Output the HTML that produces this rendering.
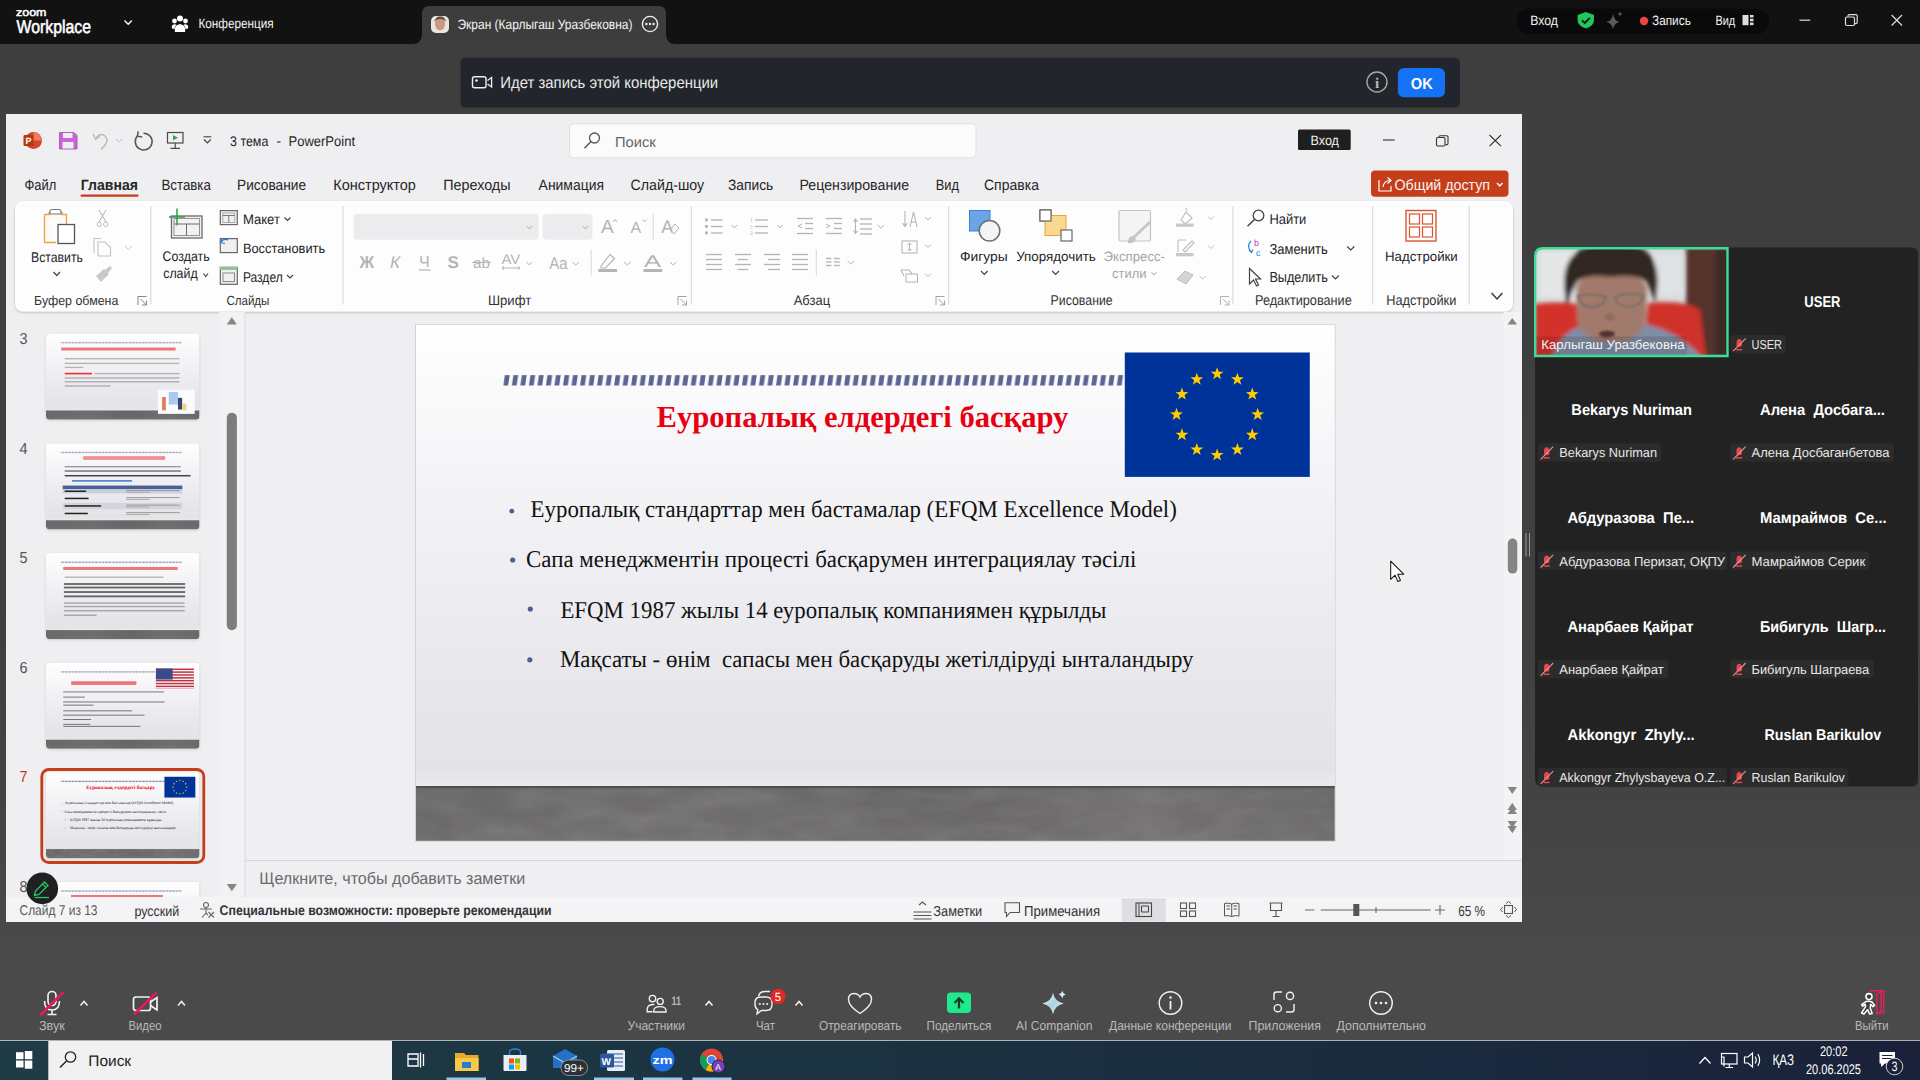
<!DOCTYPE html>
<html><head><meta charset="utf-8"><title>Zoom</title>
<style>*{margin:0;padding:0}html,body{width:1920px;height:1080px;overflow:hidden;background:#404040}svg{display:block}text{white-space:pre}</style>
</head><body><svg width="1920" height="1080" viewBox="0 0 1920 1080" text-rendering="geometricPrecision" xml:space="preserve">
<defs><linearGradient id="bg" x1="0" y1="0" x2="0" y2="1"><stop offset="0" stop-color="#3e3e3e"/><stop offset="0.55" stop-color="#404040"/><stop offset="0.74" stop-color="#434343"/><stop offset="0.9" stop-color="#4a4a4a"/><stop offset="1" stop-color="#4a4a4a"/></linearGradient><filter id="tsh" x="-10%" y="-10%" width="120%" height="130%"><feGaussianBlur stdDeviation="1.5"/></filter><filter id="rsh" x="-2%" y="-10%" width="104%" height="125%"><feGaussianBlur in="SourceAlpha" stdDeviation="1.2"/><feOffset dy="1" result="b"/><feComponentTransfer><feFuncA type="linear" slope="0.25"/></feComponentTransfer><feMerge><feMergeNode/><feMergeNode in="SourceGraphic"/></feMerge></filter></defs>
<rect x="0" y="0" width="1920" height="1080" fill="url(#bg)"/>
<rect x="0" y="0" width="1920" height="44" fill="#121212"/>
<path d="M412,44 Q422,44 422,34 L422,14 Q422,6 430,6 L658,6 Q666,6 666,14 L666,34 Q666,44 676,44 Z" fill="#3d3d3d"/>
<text x="16.00" y="16.40" font-family="Liberation Sans" font-size="11.01" fill="#fff" textLength="30.50" lengthAdjust="spacingAndGlyphs" stroke="#fff" stroke-width="0.5">zoom</text>
<text x="16.60" y="32.50" font-family="Liberation Sans" font-size="18.41" fill="#fff" textLength="74.38" lengthAdjust="spacingAndGlyphs" stroke="#fff" stroke-width="0.55">Workplace</text>
<path d="M124.5,20.5 L128.2,24.3 L131.8,20.5" stroke="#fff" stroke-width="1.3" fill="none"/>
<g fill="#fff"><circle cx="180" cy="18.5" r="3"/><circle cx="174.5" cy="21" r="2.4"/><circle cx="185.5" cy="21" r="2.4"/><path d="M175,32 Q173.5,25 180,24 Q186.5,25 185,32 Z"/><path d="M172,28.5 Q171,24.5 174.5,24.2 Q176,24.3 176.5,25 Q174.3,26.5 174.5,29 Z"/><path d="M188,28.5 Q189,24.5 185.5,24.2 Q184,24.3 183.5,25 Q185.7,26.5 185.5,29 Z"/></g>
<text x="198.40" y="28.40" font-family="Liberation Sans" font-size="13.62" fill="#f2f2f2" textLength="75.33" lengthAdjust="spacingAndGlyphs" >Конференция</text>
<rect x="431" y="16" width="18" height="17" rx="5" fill="#e8e4e0"/><ellipse cx="440" cy="24" rx="5" ry="6.5" fill="#c89a80"/><path d="M434,22 Q436,16 440,16.5 Q445,16 446,22 Q444,19 440,19 Q436,19 434,22Z" fill="#6b4a3a"/>
<text x="457.50" y="28.60" font-family="Liberation Sans" font-size="13.62" fill="#f2f2f2" textLength="174.97" lengthAdjust="spacingAndGlyphs" >Экран (Карлыгаш Уразбековна)</text>
<circle cx="650" cy="24" r="7.6" stroke="#eee" stroke-width="1.4" fill="none"/><g fill="#eee"><circle cx="646.4" cy="24" r="1.2"/><circle cx="650" cy="24" r="1.2"/><circle cx="653.6" cy="24" r="1.2"/></g>
<rect x="1516.5" y="8.5" width="253" height="25.5" rx="12.7" fill="#0a0a0a"/>
<text x="1530.20" y="25.20" font-family="Liberation Sans" font-size="13.62" fill="#f2f2f2" textLength="27.77" lengthAdjust="spacingAndGlyphs" >Вход</text>
<path d="M1585.8,12 L1594,15 L1594,20 Q1594,26 1585.8,28.5 Q1577.6,26 1577.6,20 L1577.6,15 Z" fill="#22c55e"/><path d="M1582,20.3 L1584.8,23 L1589.8,17.8" stroke="#111" stroke-width="1.8" fill="none"/>
<path d="M1613,14 Q1614,21 1620,22 Q1614,23 1613,29 Q1612,23 1606,22 Q1612,21 1613,14Z" fill="#5a5a5a"/><path d="M1620,11.5 Q1620.4,13.6 1622.5,14 Q1620.4,14.4 1620,16.5 Q1619.6,14.4 1617.5,14 Q1619.6,13.6 1620,11.5Z" fill="#5a5a5a"/>
<circle cx="1644" cy="21" r="4.2" fill="#f04444"/>
<text x="1652.00" y="24.50" font-family="Liberation Sans" font-size="13.48" fill="#f2f2f2" textLength="38.80" lengthAdjust="spacingAndGlyphs" >Запись</text>
<text x="1715.50" y="24.70" font-family="Liberation Sans" font-size="13.48" fill="#f2f2f2" textLength="19.72" lengthAdjust="spacingAndGlyphs" >Вид</text>
<rect x="1742.5" y="15" width="6" height="10.2" fill="#ddd"/><rect x="1750" y="15" width="3.5" height="2.5" fill="#ddd"/><rect x="1750" y="18.8" width="3.5" height="2.5" fill="#ddd"/><rect x="1750" y="22.6" width="3.5" height="2.5" fill="#ddd"/>
<path d="M1799.5,20.2 H1810.2" stroke="#ddd" stroke-width="1.2"/>
<rect x="1845.5" y="17" width="9" height="8.5" rx="1.2" stroke="#ddd" stroke-width="1.2" fill="none"/><path d="M1848,16.5 V15.8 Q1848,14.6 1849.2,14.6 H1856 Q1857.2,14.6 1857.2,15.8 V22.5 Q1857.2,23.7 1856,23.7 H1855" stroke="#ddd" stroke-width="1.2" fill="none"/>
<path d="M1891.6,15 L1902,25.5 M1902,15 L1891.6,25.5" stroke="#ddd" stroke-width="1.2"/>
<rect x="460.5" y="57.8" width="999.5" height="49.8" rx="5" fill="#22262c"/>
<rect x="472.5" y="76.8" width="13.5" height="11" rx="2" stroke="#eee" stroke-width="1.4" fill="none"/><circle cx="476.5" cy="80.5" r="1.3" fill="#eee"/><path d="M487.5,80.5 L491.6,77.5 V87 L487.5,84" stroke="#eee" stroke-width="1.3" fill="none"/>
<text x="500.20" y="88.20" font-family="Liberation Sans" font-size="16.23" fill="#e8e8e8" textLength="218.01" lengthAdjust="spacingAndGlyphs" >Идет запись этой конференции</text>
<circle cx="1377" cy="82" r="10" stroke="#a8a8a8" stroke-width="1.4" fill="none"/>
<text x="1377" y="87.5" font-family="Liberation Serif" font-size="15" fill="#b8b8b8" text-anchor="middle" font-weight="bold">i</text>
<rect x="1397.9" y="68" width="47.1" height="29.2" rx="6" fill="#1473f5"/>
<text x="1410.80" y="88.90" font-family="Liberation Sans" font-size="15.65" fill="#fff" font-weight="bold" textLength="21.95" lengthAdjust="spacingAndGlyphs" >OK</text>
<rect x="6" y="114" width="1516" height="808" fill="#efeef1"/>
<circle cx="33.5" cy="140.5" r="8.5" fill="#d0472b"/><path d="M33.5,132 A8.5,8.5 0 0 1 42,140.5 L33.5,140.5Z" fill="#ee7d5c"/><rect x="23.5" y="135" width="10" height="11" rx="1.2" fill="#b7380f"/><text x="25.6" y="144.2" font-family="Liberation Sans" font-weight="bold" font-size="9" fill="#fff">P</text>
<path d="M59.5,132.5 H74 L77,135.5 V149 H59.5 Z" fill="#c767d6"/><rect x="63" y="132.5" width="9.5" height="5.5" fill="#efeef1"/><rect x="62.5" y="142" width="11" height="7" fill="#efeef1"/><path d="M59.5,132.5 H74 L77,135.5 V149 H59.5 Z" stroke="#a04ab0" stroke-width="0.8" fill="none"/>
<path d="M96,138 Q100,132.5 104.5,135.5 Q109,139.5 105.5,144.5 L101,149.5" stroke="#b8b8b8" stroke-width="1.4" fill="none"/><path d="M93,134 L95.5,139 L100,136.5" stroke="#b8b8b8" stroke-width="1.4" fill="none"/>
<path d="M116.0,139.0 L119.0,142.0 L122.0,139.0" stroke="#c0c0c0" stroke-width="1" fill="none"/>
<path d="M137.6,135.8 A8.4,8.4 0 1 0 143.5,133.2" stroke="#555" stroke-width="1.5" fill="none"/><path d="M138.2,131.4 L137.4,136.2 L142.2,137" stroke="#555" stroke-width="1.5" fill="none"/>
<rect x="167.5" y="132.5" width="15.5" height="10.5" fill="none" stroke="#4a4a4a" stroke-width="1.2"/><path d="M173,135 L178,137.8 L173,140.6Z" fill="#3aa05a"/><path d="M175.2,143 V148 M170.5,148.3 H180" stroke="#4a4a4a" stroke-width="1.2"/>
<path d="M203.5,136.8 H211.3" stroke="#444" stroke-width="1.1"/><path d="M204,139.5 L207.4,143 L210.8,139.5" stroke="#444" stroke-width="1.2" fill="none"/>
<text x="230.00" y="146.10" font-family="Liberation Sans" font-size="14.06" fill="#262626" textLength="38.34" lengthAdjust="spacingAndGlyphs" >3 тема</text>
<path d="M277,142 H280.5" stroke="#262626" stroke-width="1.1"/>
<text x="288.50" y="146.10" font-family="Liberation Sans" font-size="14.06" fill="#262626" textLength="66.51" lengthAdjust="spacingAndGlyphs" >PowerPoint</text>
<rect x="569.5" y="123.7" width="406.5" height="34" rx="4" fill="#fbfbfc" stroke="#e2e1e4" stroke-width="1"/>
<circle cx="594.5" cy="138" r="5" stroke="#555" stroke-width="1.3" fill="none"/><path d="M591,141.5 L584.5,148.2" stroke="#555" stroke-width="1.4"/>
<text x="615.00" y="147.10" font-family="Liberation Sans" font-size="14.49" fill="#666" textLength="40.68" lengthAdjust="spacingAndGlyphs" >Поиск</text>
<rect x="1298" y="129.6" width="52.7" height="20.4" rx="1.5" fill="#1f1f1f"/>
<text x="1310.50" y="144.60" font-family="Liberation Sans" font-size="13.62" fill="#f0f0f0" textLength="28.47" lengthAdjust="spacingAndGlyphs" >Вход</text>
<path d="M1383,140 H1394.6" stroke="#333" stroke-width="1.1"/>
<rect x="1436.5" y="137.5" width="8.5" height="8.5" rx="1.2" stroke="#333" stroke-width="1.1" fill="none"/><path d="M1439,137 V136.8 Q1439,135.7 1440.2,135.7 H1446.8 Q1448,135.7 1448,136.8 V143.4 Q1448,144.6 1446.8,144.6 H1445.5" stroke="#333" stroke-width="1.1" fill="none"/>
<path d="M1489.5,135 L1501,146.2 M1501,135 L1489.5,146.2" stroke="#333" stroke-width="1.1"/>
<text x="24.40" y="190.00" font-family="Liberation Sans" font-size="14.93" fill="#262626" textLength="31.88" lengthAdjust="spacingAndGlyphs" >Файл</text>
<text x="80.80" y="190.00" font-family="Liberation Sans" font-size="14.93" fill="#262626" font-weight="bold" textLength="57.10" lengthAdjust="spacingAndGlyphs" >Главная</text>
<text x="161.50" y="190.00" font-family="Liberation Sans" font-size="14.93" fill="#262626" textLength="49.28" lengthAdjust="spacingAndGlyphs" >Вставка</text>
<text x="237.00" y="190.00" font-family="Liberation Sans" font-size="14.93" fill="#262626" textLength="69.03" lengthAdjust="spacingAndGlyphs" >Рисование</text>
<text x="333.30" y="190.00" font-family="Liberation Sans" font-size="14.93" fill="#262626" textLength="82.55" lengthAdjust="spacingAndGlyphs" >Конструктор</text>
<text x="443.30" y="190.00" font-family="Liberation Sans" font-size="14.93" fill="#262626" textLength="67.18" lengthAdjust="spacingAndGlyphs" >Переходы</text>
<text x="538.60" y="190.00" font-family="Liberation Sans" font-size="14.93" fill="#262626" textLength="65.44" lengthAdjust="spacingAndGlyphs" >Анимация</text>
<text x="630.60" y="190.00" font-family="Liberation Sans" font-size="14.93" fill="#262626" textLength="73.54" lengthAdjust="spacingAndGlyphs" >Слайд-шоу</text>
<text x="728.00" y="190.00" font-family="Liberation Sans" font-size="14.93" fill="#262626" textLength="45.29" lengthAdjust="spacingAndGlyphs" >Запись</text>
<text x="799.50" y="190.00" font-family="Liberation Sans" font-size="14.93" fill="#262626" textLength="109.55" lengthAdjust="spacingAndGlyphs" >Рецензирование</text>
<text x="935.70" y="190.00" font-family="Liberation Sans" font-size="14.93" fill="#262626" textLength="23.26" lengthAdjust="spacingAndGlyphs" >Вид</text>
<text x="984.00" y="190.00" font-family="Liberation Sans" font-size="14.93" fill="#262626" textLength="54.95" lengthAdjust="spacingAndGlyphs" >Справка</text>
<rect x="80.5" y="194.5" width="58" height="2.3" rx="1" fill="#c43e1c"/>
<rect x="1371" y="170.5" width="137.5" height="26.2" rx="4" fill="#c43e1c"/>
<path d="M1379,180 V191 H1391 V186" stroke="#fff" stroke-width="1.2" fill="none"/><path d="M1383,187 Q1384,180.5 1390,180.5 M1387.5,177.5 L1391,180.5 L1387.5,183.5" stroke="#fff" stroke-width="1.2" fill="none"/>
<text x="1394.50" y="190.00" font-family="Liberation Sans" font-size="14.93" fill="#fff2ee" textLength="95.51" lengthAdjust="spacingAndGlyphs" >Общий доступ</text>
<path d="M1497.0,183.0 L1499.8,186.0 L1502.5,183.0" stroke="#fff" stroke-width="1.3" fill="none"/>
<rect x="15" y="201" width="1498" height="110.5" rx="8" fill="#fdfdfe" filter="url(#rsh)"/>
<path d="M44.5,214.5 H49 V212.5 H62 V214.5 H66.5 V226 M44.5,214.5 V242.5 H56" stroke="#e8a43a" stroke-width="1.3" fill="#fdfaf5"/><path d="M50,211.5 Q50,209.5 52,209.5 H59 Q61,209.5 61,211.5 V214 H50Z" fill="#fff" stroke="#777" stroke-width="1.1"/>
<rect x="58" y="224.5" width="16.5" height="19" fill="#fff" stroke="#555" stroke-width="1.3"/>
<text x="31.00" y="262.00" font-family="Liberation Sans" font-size="14.06" fill="#262626" textLength="51.97" lengthAdjust="spacingAndGlyphs" >Вставить</text>
<path d="M53.5,272.0 L56.8,275.5 L60.0,272.0" stroke="#444" stroke-width="1.2" fill="none"/>
<path d="M99,210 L106,222 M106,210 L99,222" stroke="#bdbdbd" stroke-width="1.1"/><circle cx="99.3" cy="224.3" r="2.2" stroke="#bdbdbd" fill="none"/><circle cx="105.7" cy="224.3" r="2.2" stroke="#bdbdbd" fill="none"/>
<path d="M94,253 V238.5 H101 M98,242 H105 L110.5,247.5 V256 H98Z" stroke="#c2c2c2" stroke-width="1.1" fill="none"/>
<path d="M125.0,246.0 L128.5,249.5 L132.0,246.0" stroke="#c8c8c8" stroke-width="1" fill="none"/>
<path d="M96,276 L104,269 L109,274 L101,282 Z" fill="#c8c8c8"/><path d="M105,270 L110,266 L112,268 L108,273Z" fill="#c8c8c8"/>
<text x="34.00" y="305.40" font-family="Liberation Sans" font-size="13.19" fill="#333" textLength="84.39" lengthAdjust="spacingAndGlyphs" >Буфер обмена</text>
<path d="M138.0,305.0 V296.5 H146.5 M140.5,299.0 L146.5,305.0 M142.0,305.0 H146.5 V300.5" stroke="#777" stroke-width="0.9" fill="none"/>
<path d="M150.8,206.0 V304.5" stroke="#d4d4d8" stroke-width="1"/>
<rect x="171.5" y="216" width="30.5" height="22" fill="#f2f2f2" stroke="#6b6b6b" stroke-width="1.3"/><rect x="174" y="218.5" width="25.5" height="17" fill="none" stroke="#8a8a8a" stroke-width="0.9"/><path d="M174,224 H199.5 M186.5,224 V235.5" stroke="#6b6b6b" stroke-width="1"/>
<path d="M169,217 H185 M177,208.5 V225.5" stroke="#2e9e4a" stroke-width="1.5"/>
<text x="162.60" y="261.00" font-family="Liberation Sans" font-size="13.91" fill="#262626" textLength="47.02" lengthAdjust="spacingAndGlyphs" >Создать</text>
<text x="163.20" y="278.40" font-family="Liberation Sans" font-size="13.91" fill="#262626" textLength="34.47" lengthAdjust="spacingAndGlyphs" >слайд</text>
<path d="M203.5,273.5 L205.8,276.5 L208.0,273.5" stroke="#444" stroke-width="1.2" fill="none"/>
<rect x="220.3" y="210.6" width="17" height="14.0" fill="#f0f0f0" stroke="#666" stroke-width="1.2"/>
<rect x="220.3" y="238.6" width="17" height="14.0" fill="#f0f0f0" stroke="#666" stroke-width="1.2"/>
<rect x="220.3" y="267.3" width="17" height="17.0" fill="#f0f0f0" stroke="#666" stroke-width="1.2"/>
<path d="M222.5,215.5 H235 M228.8,215.5 V222.5" stroke="#777" stroke-width="1"/><rect x="222.8" y="213" width="12" height="9.5" fill="none" stroke="#999" stroke-width="0.8"/>
<path d="M221,242 Q224,238 228,240" stroke="#2d7fd3" stroke-width="1.4" fill="none"/><path d="M222,238 L220.5,242.5 L225,243.5" stroke="#2d7fd3" stroke-width="1.2" fill="none"/>
<rect x="220" y="267" width="17.5" height="3" fill="#8cc79a"/><rect x="223" y="273" width="11.5" height="8.5" fill="none" stroke="#888" stroke-width="1"/>
<text x="242.90" y="224.00" font-family="Liberation Sans" font-size="13.77" fill="#262626" textLength="37.06" lengthAdjust="spacingAndGlyphs" >Макет</text>
<path d="M284.5,217.5 L287.5,220.5 L290.5,217.5" stroke="#444" stroke-width="1.2" fill="none"/>
<text x="242.90" y="252.80" font-family="Liberation Sans" font-size="13.62" fill="#262626" textLength="82.29" lengthAdjust="spacingAndGlyphs" >Восстановить</text>
<text x="242.90" y="281.50" font-family="Liberation Sans" font-size="14.20" fill="#262626" textLength="39.83" lengthAdjust="spacingAndGlyphs" >Раздел</text>
<path d="M287.0,275.0 L290.0,278.0 L293.0,275.0" stroke="#444" stroke-width="1.2" fill="none"/>
<text x="226.40" y="305.40" font-family="Liberation Sans" font-size="13.19" fill="#333" textLength="43.03" lengthAdjust="spacingAndGlyphs" >Слайды</text>
<path d="M343.0,206.0 V304.5" stroke="#d4d4d8" stroke-width="1"/>
<rect x="353.6" y="214" width="185" height="25.8" rx="4" fill="#ececee"/>
<path d="M527.0,226.0 L529.5,229.0 L532.0,226.0" stroke="#b0b0b0" stroke-width="1" fill="none"/>
<rect x="542.8" y="214" width="49.7" height="25.8" rx="4" fill="#ececee"/>
<path d="M583.0,226.0 L585.5,229.0 L588.0,226.0" stroke="#b0b0b0" stroke-width="1" fill="none"/>
<text x="601" y="233.3" font-family="Liberation Sans" font-size="19" fill="#b4b4b4">A</text><path d="M613,222 L615,219.5 L617,222" stroke="#b4b4b4" fill="none"/>
<text x="630.6" y="233.3" font-family="Liberation Sans" font-size="16" fill="#b4b4b4">A</text><path d="M642.5,219.5 L644.5,222 L646.5,219.5" stroke="#b4b4b4" fill="none"/>
<path d="M653.2,214.0 V239.8" stroke="#d8d8d8" stroke-width="1"/>
<text x="661.3" y="233.3" font-family="Liberation Sans" font-size="18" fill="#b4b4b4">A</text><path d="M670,230 L675,224 L679,228 L674,234Z" fill="none" stroke="#b4b4b4"/>
<text x="359.4" y="267.6" font-family="Liberation Sans" font-weight="bold" font-size="17" fill="#b4b4b4" textLength="14.6" lengthAdjust="spacingAndGlyphs">Ж</text>
<text x="390" y="267.6" font-family="Liberation Sans" font-style="italic" font-size="17" fill="#b4b4b4">К</text>
<text x="419" y="266.5" font-family="Liberation Sans" font-size="16" fill="#b4b4b4">Ч</text><path d="M419,270 H430.4" stroke="#b4b4b4" stroke-width="1.2"/>
<text x="447.5" y="267.6" font-family="Liberation Sans" font-weight="bold" font-size="17" fill="#b4b4b4">S</text>
<text x="473" y="267.6" font-family="Liberation Sans" font-size="15" fill="#b4b4b4" textLength="17" lengthAdjust="spacingAndGlyphs">ab</text><path d="M472,262.5 H491" stroke="#b4b4b4" stroke-width="1"/>
<text x="501.4" y="264" font-family="Liberation Sans" font-size="14" fill="#b4b4b4" textLength="18.8" lengthAdjust="spacingAndGlyphs">AV</text><path d="M502,268 H520 M504,266 L502,268 L504,270 M518,266 L520,268 L518,270" stroke="#b4b4b4" fill="none"/>
<path d="M526.6,262.0 L529.3,265.0 L532.0,262.0" stroke="#b4b4b4" stroke-width="1" fill="none"/>
<text x="549.2" y="269" font-family="Liberation Sans" font-size="17" fill="#b4b4b4" textLength="18.4" lengthAdjust="spacingAndGlyphs">Aa</text>
<path d="M572.5,262.0 L575.8,265.0 L579.0,262.0" stroke="#b4b4b4" stroke-width="1" fill="none"/>
<path d="M591.2,249.5 V275.3" stroke="#d8d8d8" stroke-width="1"/>
<path d="M601,266 L610,254.5 L614.5,258.5 L605.5,268 L601,268Z" fill="none" stroke="#b4b4b4" stroke-width="1.2"/><rect x="598.3" y="269" width="18.7" height="3" fill="#b4b4b4"/>
<path d="M624.0,262.0 L627.3,265.0 L630.6,262.0" stroke="#b4b4b4" stroke-width="1" fill="none"/>
<text x="644" y="266.5" font-family="Liberation Sans" font-size="17" fill="#b4b4b4" textLength="17" lengthAdjust="spacingAndGlyphs">A</text><rect x="643.5" y="269" width="18.7" height="3" fill="#b4b4b4"/>
<path d="M670.0,262.0 L673.2,265.0 L676.5,262.0" stroke="#b4b4b4" stroke-width="1" fill="none"/>
<text x="487.90" y="305.30" font-family="Liberation Sans" font-size="13.91" fill="#333" textLength="43.33" lengthAdjust="spacingAndGlyphs" >Шрифт</text>
<path d="M678.0,305.0 V296.5 H686.5 M680.5,299.0 L686.5,305.0 M682.0,305.0 H686.5 V300.5" stroke="#999" stroke-width="0.9" fill="none"/>
<path d="M691.3,206.2 V304.4" stroke="#d4d4d8" stroke-width="1"/>
<g><rect x="705" y="218.5" width="2.8" height="2.8" fill="#b4b4b4"/><rect x="705" y="225.0" width="2.8" height="2.8" fill="#b4b4b4"/><rect x="705" y="231.5" width="2.8" height="2.8" fill="#b4b4b4"/><path d="M711.0,220.0 H722.6" stroke="#b4b4b4" stroke-width="1.3"/><path d="M711.0,226.5 H722.6" stroke="#b4b4b4" stroke-width="1.3"/><path d="M711.0,233.0 H722.6" stroke="#b4b4b4" stroke-width="1.3"/></g>
<path d="M731.7,225.0 L734.4,228.0 L737.0,225.0" stroke="#b4b4b4" stroke-width="1" fill="none"/>
<g font-family="Liberation Sans" font-size="5" fill="#b4b4b4"><text x="750" y="222">1</text><text x="750" y="228.5">2</text><text x="750" y="235">3</text></g><path d="M755.0,220.0 H767.8" stroke="#b4b4b4" stroke-width="1.3"/><path d="M755.0,226.5 H767.8" stroke="#b4b4b4" stroke-width="1.3"/><path d="M755.0,233.0 H767.8" stroke="#b4b4b4" stroke-width="1.3"/>
<path d="M777.5,225.0 L780.2,228.0 L783.0,225.0" stroke="#b4b4b4" stroke-width="1" fill="none"/>
<path d="M797.0,218.5 H813.0" stroke="#b4b4b4" stroke-width="1.3"/><path d="M797.0,233.5 H813.0" stroke="#b4b4b4" stroke-width="1.3"/><path d="M805.0,223.5 H813.0" stroke="#b4b4b4" stroke-width="1.3"/><path d="M805.0,228.5 H813.0" stroke="#b4b4b4" stroke-width="1.3"/><path d="M802,224 L798,226 L802,228" stroke="#b4b4b4" fill="none"/>
<path d="M826.0,218.5 H842.0" stroke="#b4b4b4" stroke-width="1.3"/><path d="M826.0,233.5 H842.0" stroke="#b4b4b4" stroke-width="1.3"/><path d="M834.0,223.5 H842.0" stroke="#b4b4b4" stroke-width="1.3"/><path d="M834.0,228.5 H842.0" stroke="#b4b4b4" stroke-width="1.3"/><path d="M826,224 L830,226 L826,228" stroke="#b4b4b4" fill="none"/>
<path d="M860.0,219.0 H872.0" stroke="#b4b4b4" stroke-width="1.3"/><path d="M860.0,224.0 H872.0" stroke="#b4b4b4" stroke-width="1.3"/><path d="M860.0,229.0 H872.0" stroke="#b4b4b4" stroke-width="1.3"/><path d="M860.0,234.0 H872.0" stroke="#b4b4b4" stroke-width="1.3"/><path d="M855.5,219.5 V233 M853.5,222 L855.5,219 L857.5,222 M853.5,230.5 L855.5,233.5 L857.5,230.5" stroke="#b4b4b4" stroke-width="1.1" fill="none"/>
<path d="M877.6,225.0 L880.8,228.0 L884.0,225.0" stroke="#b4b4b4" stroke-width="1" fill="none"/>
<path d="M905,211 V226 M902.5,223 L905,226.5 L907.5,223 M910,227 L913.5,212 L917,227 M911.2,222 H915.8" stroke="#b4b4b4" stroke-width="1.1" fill="none"/>
<path d="M925.0,217.0 L928.0,220.0 L931.0,217.0" stroke="#b4b4b4" stroke-width="1" fill="none"/>
<path d="M706.0,254.5 H722.0" stroke="#b4b4b4" stroke-width="1.3"/><path d="M706.0,259.5 H722.0" stroke="#b4b4b4" stroke-width="1.3"/><path d="M706.0,264.5 H722.0" stroke="#b4b4b4" stroke-width="1.3"/><path d="M706.0,269.5 H722.0" stroke="#b4b4b4" stroke-width="1.3"/><path d="M735.0,254.5 H751.0" stroke="#b4b4b4" stroke-width="1.3"/><path d="M735.0,264.5 H751.0" stroke="#b4b4b4" stroke-width="1.3"/><path d="M738.0,259.5 H748.0" stroke="#b4b4b4" stroke-width="1.3"/><path d="M738.0,269.5 H748.0" stroke="#b4b4b4" stroke-width="1.3"/><path d="M764.0,254.5 H780.0" stroke="#b4b4b4" stroke-width="1.3"/><path d="M764.0,264.5 H780.0" stroke="#b4b4b4" stroke-width="1.3"/><path d="M768.0,259.5 H780.0" stroke="#b4b4b4" stroke-width="1.3"/><path d="M768.0,269.5 H780.0" stroke="#b4b4b4" stroke-width="1.3"/><path d="M792.0,254.5 H808.0" stroke="#b4b4b4" stroke-width="1.3"/><path d="M792.0,259.5 H808.0" stroke="#b4b4b4" stroke-width="1.3"/><path d="M792.0,264.5 H808.0" stroke="#b4b4b4" stroke-width="1.3"/><path d="M792.0,269.5 H808.0" stroke="#b4b4b4" stroke-width="1.3"/>
<path d="M816.3,249.5 V275.3" stroke="#d8d8d8" stroke-width="1"/>
<path d="M826.0,258.5 H831.5" stroke="#b4b4b4" stroke-width="1.3"/><path d="M826.0,262.0 H831.5" stroke="#b4b4b4" stroke-width="1.3"/><path d="M826.0,265.5 H831.5" stroke="#b4b4b4" stroke-width="1.3"/><path d="M834.0,258.5 H839.8" stroke="#b4b4b4" stroke-width="1.3"/><path d="M834.0,262.0 H839.8" stroke="#b4b4b4" stroke-width="1.3"/><path d="M834.0,265.5 H839.8" stroke="#b4b4b4" stroke-width="1.3"/>
<path d="M847.6,261.0 L850.8,264.0 L854.0,261.0" stroke="#b4b4b4" stroke-width="1" fill="none"/>
<rect x="902" y="241" width="15" height="12" fill="none" stroke="#b4b4b4" stroke-width="1.1"/><path d="M909.5,243 V251 M907.5,245 L909.5,243 L911.5,245 M907.5,249 L909.5,251 L911.5,249" stroke="#b4b4b4" fill="none"/>
<path d="M925.0,244.5 L928.0,247.5 L931.0,244.5" stroke="#b4b4b4" stroke-width="1" fill="none"/>
<path d="M901,270 H909 L912,274 M901,270 L904,276" stroke="#b4b4b4" stroke-width="1.1" fill="none"/><rect x="906" y="274" width="11.5" height="8" fill="none" stroke="#b4b4b4"/>
<path d="M925.0,273.5 L928.0,276.5 L931.0,273.5" stroke="#b4b4b4" stroke-width="1" fill="none"/>
<text x="793.70" y="305.30" font-family="Liberation Sans" font-size="13.91" fill="#333" textLength="36.49" lengthAdjust="spacingAndGlyphs" >Абзац</text>
<path d="M936.0,305.0 V296.5 H944.5 M938.5,299.0 L944.5,305.0 M940.0,305.0 H944.5 V300.5" stroke="#999" stroke-width="0.9" fill="none"/>
<path d="M948.7,206.2 V304.4" stroke="#d4d4d8" stroke-width="1"/>
<rect x="969.5" y="210.5" width="20.5" height="20.5" fill="#6aa6e6" stroke="#3f80d2" stroke-width="1"/><circle cx="989.5" cy="230.8" r="10.3" fill="#f4f4f4" stroke="#6e6e6e" stroke-width="1.5"/>
<text x="960.00" y="261.20" font-family="Liberation Sans" font-size="13.48" fill="#262626" textLength="47.64" lengthAdjust="spacingAndGlyphs" >Фигуры</text>
<path d="M981.0,271.0 L984.3,274.5 L987.6,271.0" stroke="#444" stroke-width="1.2" fill="none"/>
<rect x="1040" y="210" width="11" height="11" fill="#fff" stroke="#666" stroke-width="1.2"/><path d="M1052,216 H1065 V230" stroke="#e4a43a" stroke-width="0" fill="none"/><rect x="1045" y="215.5" width="21" height="20" fill="#fbd88f" stroke="#e8a33a" stroke-width="1"/><rect x="1040" y="210" width="11" height="11" fill="#fff" stroke="#666" stroke-width="1.2"/><rect x="1061" y="230" width="11" height="11" fill="#fff" stroke="#666" stroke-width="1.2"/>
<text x="1016.20" y="261.20" font-family="Liberation Sans" font-size="13.48" fill="#262626" textLength="79.63" lengthAdjust="spacingAndGlyphs" >Упорядочить</text>
<path d="M1052.2,271.0 L1055.6,274.5 L1059.0,271.0" stroke="#444" stroke-width="1.2" fill="none"/>
<rect x="1119" y="210.5" width="31.5" height="30.5" rx="1.5" fill="#f4f4f4" stroke="#c4c4c4" stroke-width="1.2"/><path d="M1133,238 L1150,222" stroke="#c4c4c4" stroke-width="2.5"/><path d="M1128,243 Q1128,236 1133,236 L1136,239 Q1134,244 1128,243Z" fill="#c4c4c4"/>
<text x="1103.50" y="261.20" font-family="Liberation Sans" font-size="13.48" fill="#a6a6a6" textLength="61.53" lengthAdjust="spacingAndGlyphs" >Экспресс-</text>
<text x="1112.00" y="278.40" font-family="Liberation Sans" font-size="13.48" fill="#a6a6a6" textLength="34.49" lengthAdjust="spacingAndGlyphs" >стили</text>
<path d="M1151.4,272.0 L1154.1,275.0 L1156.7,272.0" stroke="#aaa" stroke-width="1" fill="none"/>
<path d="M1181,220 L1186,212 L1192,218 L1185,224Z M1187,211 L1186,208" stroke="#bdbdbd" stroke-width="1.1" fill="none"/><rect x="1176" y="223.5" width="17.5" height="3.3" fill="#c8c8c8"/>
<path d="M1208.0,216.5 L1211.0,219.5 L1214.0,216.5" stroke="#c0c0c0" stroke-width="1" fill="none"/>
<path d="M1178,240 H1186 M1178,240 V252 M1183,250 L1192,241 L1194,243 L1185,252Z" stroke="#bdbdbd" stroke-width="1.1" fill="none"/><rect x="1176" y="253" width="17.5" height="3.3" fill="#c8c8c8"/>
<path d="M1208.0,245.5 L1211.0,248.5 L1214.0,245.5" stroke="#c0c0c0" stroke-width="1" fill="none"/>
<path d="M1177,279 L1185,271 L1193,275 L1186,284 Z" fill="#d4d4d4" stroke="#bdbdbd" stroke-width="1"/>
<path d="M1199.7,276.0 L1202.8,279.0 L1205.8,276.0" stroke="#c0c0c0" stroke-width="1" fill="none"/>
<text x="1050.60" y="305.10" font-family="Liberation Sans" font-size="14.20" fill="#333" textLength="62.11" lengthAdjust="spacingAndGlyphs" >Рисование</text>
<path d="M1220.5,305.0 V296.5 H1229.0 M1223.0,299.0 L1229.0,305.0 M1224.5,305.0 H1229.0 V300.5" stroke="#aaa" stroke-width="0.9" fill="none"/>
<path d="M1232.9,206.2 V304.4" stroke="#d4d4d8" stroke-width="1"/>
<circle cx="1258.5" cy="215.5" r="5.3" stroke="#444" stroke-width="1.3" fill="none"/><path d="M1254.5,219.5 L1247.5,226.3" stroke="#444" stroke-width="1.5"/>
<text x="1269.40" y="224.30" font-family="Liberation Sans" font-size="14.20" fill="#262626" textLength="36.92" lengthAdjust="spacingAndGlyphs" >Найти</text>
<text x="1254" y="246" font-family="Liberation Sans" font-size="9" fill="#b346c2">b</text><text x="1256" y="256" font-family="Liberation Sans" font-size="9" fill="#2d7fd3">c</text><path d="M1251,241 Q1246,246 1251,252 M1249,250 L1251.5,252.5 L1253,249.5" stroke="#2d7fd3" stroke-width="1.2" fill="none"/>
<text x="1269.40" y="253.50" font-family="Liberation Sans" font-size="14.49" fill="#262626" textLength="58.36" lengthAdjust="spacingAndGlyphs" >Заменить</text>
<path d="M1347.2,246.5 L1350.8,250.0 L1354.3,246.5" stroke="#444" stroke-width="1.2" fill="none"/>
<path d="M1249.5,268.5 L1249.5,284 L1253.5,280 L1256.5,286 L1258.5,285 L1255.5,279 L1260.5,279 Z" fill="none" stroke="#444" stroke-width="1.2"/>
<text x="1269.40" y="282.10" font-family="Liberation Sans" font-size="14.49" fill="#262626" textLength="58.39" lengthAdjust="spacingAndGlyphs" >Выделить</text>
<path d="M1332.0,275.5 L1335.5,279.0 L1338.9,275.5" stroke="#444" stroke-width="1.2" fill="none"/>
<text x="1255.00" y="305.10" font-family="Liberation Sans" font-size="14.20" fill="#333" textLength="96.77" lengthAdjust="spacingAndGlyphs" >Редактирование</text>
<path d="M1372.7,206.2 V304.4" stroke="#d4d4d8" stroke-width="1"/>
<rect x="1406" y="210.5" width="30" height="30.5" fill="none" stroke="#d9552f" stroke-width="1.4"/><rect x="1409.5" y="214" width="10" height="10" fill="none" stroke="#d9552f" stroke-width="1.2"/><rect x="1422.5" y="214" width="10" height="10" fill="none" stroke="#d9552f" stroke-width="1.2"/><rect x="1409.5" y="227" width="10" height="10" fill="none" stroke="#d9552f" stroke-width="1.2"/><rect x="1422.5" y="227" width="10" height="10" fill="none" stroke="#d9552f" stroke-width="1.2"/>
<text x="1385.00" y="261.20" font-family="Liberation Sans" font-size="13.48" fill="#262626" textLength="72.77" lengthAdjust="spacingAndGlyphs" >Надстройки</text>
<text x="1386.20" y="305.10" font-family="Liberation Sans" font-size="14.20" fill="#333" textLength="70.11" lengthAdjust="spacingAndGlyphs" >Надстройки</text>
<path d="M1469.2,206.2 V304.4" stroke="#d4d4d8" stroke-width="1"/>
<path d="M1491.6,293.0 L1497.0,299.0 L1502.4,293.0" stroke="#333" stroke-width="1.4" fill="none"/>
<defs><linearGradient id="sbg" x1="0" y1="0" x2="0" y2="1"><stop offset="0" stop-color="#ffffff"/><stop offset="0.3" stop-color="#f4f3f6"/><stop offset="0.75" stop-color="#e6e5ea"/><stop offset="0.86" stop-color="#e4e3e8"/><stop offset="0.9" stop-color="#ebeaee"/><stop offset="1" stop-color="#ebeaee"/></linearGradient><linearGradient id="band" x1="0" y1="0" x2="1" y2="0"><stop offset="0" stop-color="#6a6869"/><stop offset="0.3" stop-color="#6f6d6e"/><stop offset="0.55" stop-color="#676566"/><stop offset="0.8" stop-color="#716e6f"/><stop offset="1" stop-color="#6a6869"/></linearGradient><linearGradient id="bandv" x1="0" y1="0" x2="0" y2="1"><stop offset="0" stop-color="#000" stop-opacity="0.12"/><stop offset="0.08" stop-color="#000" stop-opacity="0"/><stop offset="1" stop-color="#fff" stop-opacity="0.03"/></linearGradient><filter id="stone" x="0" y="0" width="100%" height="100%"><feTurbulence type="fractalNoise" baseFrequency="0.02 0.06" numOctaves="3" seed="7"/><feColorMatrix type="matrix" values="0 0 0 0 0.5  0 0 0 0 0.49  0 0 0 0 0.49  0.9 0 0 0 -0.25"/></filter><pattern id="dash" x="87.3" y="0" width="8.52" height="600" patternUnits="userSpaceOnUse"><path d="M1.6,49.7 H6.4 L4.8,60.6 H0 Z" fill="#5b6691"/></pattern><g id="s7"><rect x="0" y="0" width="918.7" height="515.6" fill="url(#sbg)"/><rect x="87.3" y="49.7" width="621.5" height="10.9" fill="url(#dash)"/><rect x="708.8" y="27.3" width="185" height="124.4" fill="#003399"/><polygon points="801.10,42.00 802.68,46.53 807.47,46.63 803.65,49.53 805.04,54.12 801.10,51.38 797.16,54.12 798.55,49.53 794.73,46.63 799.52,46.53" fill="#ffcc00"/><polygon points="821.40,47.44 822.98,51.97 827.77,52.07 823.95,54.97 825.34,59.56 821.40,56.82 817.46,59.56 818.85,54.97 815.03,52.07 819.82,51.97" fill="#ffcc00"/><polygon points="836.26,62.30 837.84,66.83 842.63,66.93 838.81,69.83 840.20,74.42 836.26,71.68 832.32,74.42 833.71,69.83 829.89,66.93 834.69,66.83" fill="#ffcc00"/><polygon points="841.70,82.60 843.28,87.13 848.07,87.23 844.25,90.13 845.64,94.72 841.70,91.98 837.76,94.72 839.15,90.13 835.33,87.23 840.12,87.13" fill="#ffcc00"/><polygon points="836.26,102.90 837.84,107.43 842.63,107.53 838.81,110.43 840.20,115.02 836.26,112.28 832.32,115.02 833.71,110.43 829.89,107.53 834.69,107.43" fill="#ffcc00"/><polygon points="821.40,117.76 822.98,122.29 827.77,122.39 823.95,125.29 825.34,129.88 821.40,127.14 817.46,129.88 818.85,125.29 815.03,122.39 819.82,122.29" fill="#ffcc00"/><polygon points="801.10,123.20 802.68,127.73 807.47,127.83 803.65,130.73 805.04,135.32 801.10,132.58 797.16,135.32 798.55,130.73 794.73,127.83 799.52,127.73" fill="#ffcc00"/><polygon points="780.80,117.76 782.38,122.29 787.17,122.39 783.35,125.29 784.74,129.88 780.80,127.14 776.86,129.88 778.25,125.29 774.43,122.39 779.22,122.29" fill="#ffcc00"/><polygon points="765.94,102.90 767.51,107.43 772.31,107.53 768.49,110.43 769.88,115.02 765.94,112.28 762.00,115.02 763.39,110.43 759.57,107.53 764.36,107.43" fill="#ffcc00"/><polygon points="760.50,82.60 762.08,87.13 766.87,87.23 763.05,90.13 764.44,94.72 760.50,91.98 756.56,94.72 757.95,90.13 754.13,87.23 758.92,87.13" fill="#ffcc00"/><polygon points="765.94,62.30 767.51,66.83 772.31,66.93 768.49,69.83 769.88,74.42 765.94,71.68 762.00,74.42 763.39,69.83 759.57,66.93 764.36,66.83" fill="#ffcc00"/><polygon points="780.80,47.44 782.38,51.97 787.17,52.07 783.35,54.97 784.74,59.56 780.80,56.82 776.86,59.56 778.25,54.97 774.43,52.07 779.22,51.97" fill="#ffcc00"/><text x="240.60" y="101.50" font-family="Liberation Serif" font-size="30.62" fill="#e60012" font-weight="bold" textLength="411.83" lengthAdjust="spacingAndGlyphs" >Еуропалық елдердегі басқару</text><circle cx="95.8" cy="186.0" r="2.4" fill="#4d5f96"/><circle cx="96.7" cy="234.8" r="2.6" fill="#4d5f96"/><circle cx="114.3" cy="283.8" r="2.6" fill="#4d5f96"/><circle cx="113.8" cy="334.6" r="2.6" fill="#4d5f96"/><text x="114.60" y="191.70" font-family="Liberation Serif" font-size="24.00" fill="#111" textLength="646.19" lengthAdjust="spacingAndGlyphs" >Еуропалық стандарттар мен бастамалар (EFQM Excellence Model)</text><text x="110.00" y="242.30" font-family="Liberation Serif" font-size="24.00" fill="#111" textLength="610.25" lengthAdjust="spacingAndGlyphs" >Сапа менеджментін процесті басқарумен интеграциялау тәсілі</text><text x="144.40" y="292.40" font-family="Liberation Serif" font-size="24.00" fill="#111" textLength="546.00" lengthAdjust="spacingAndGlyphs" >EFQM 1987 жылы 14 еуропалық компаниямен құрылды</text><text x="143.90" y="341.80" font-family="Liberation Serif" font-size="24.00" fill="#111" textLength="633.62" lengthAdjust="spacingAndGlyphs" >Мақсаты - өнім  сапасы мен басқаруды жетілдіруді ынталандыру</text><rect x="0" y="461.1" width="918.7" height="54.5" fill="url(#band)"/><rect x="0" y="461.1" width="918.7" height="54.5" fill="url(#bandv)"/><rect x="0" y="461.1" width="918.7" height="54.5" filter="url(#stone)" opacity="0.3"/><path d="M0,461.6 H918.7" stroke="#3c3b3c" stroke-width="1.2"/></g></defs>
<rect x="219" y="312" width="26" height="585" fill="#f2f1f4"/>
<path d="M245,312 V897" stroke="#dddce0" stroke-width="1"/>
<path d="M245,860.5 H1522" stroke="#d6d5d9" stroke-width="1"/>
<rect x="1503.5" y="312" width="18.5" height="548" fill="#f3f2f5"/>
<path d="M1507.5,324.5 L1512.3,318 L1517,324.5Z" fill="#858585"/>
<rect x="1507.8" y="538.6" width="9.5" height="35" rx="4.7" fill="#858585"/>
<path d="M1507.5,787 H1517 L1512.3,794Z" fill="#858585"/>
<path d="M1507.5,810 L1512.3,802.8 L1517,810Z M1507.5,814 L1512.3,806.8 L1517,814Z" fill="#858585"/>
<path d="M1507.5,821 H1517 L1512.3,828Z M1507.5,826 H1517 L1512.3,833.2Z" fill="#858585"/>
<path d="M226.8,324.4 L231.8,317.2 L236.9,324.4Z" fill="#858585"/>
<rect x="226.8" y="412.8" width="10.1" height="217.5" rx="5" fill="#7d7d7d"/>
<path d="M226.8,884 H236.9 L231.8,891.3Z" fill="#858585"/>
<rect x="415.5" y="324.7" width="919.7" height="516.6" fill="none" stroke="#d4d3d7" stroke-width="1"/>
<use href="#s7" transform="translate(416.0,325.2)"/>
<clipPath id="paneclip"><rect x="7" y="312" width="212" height="585"/></clipPath>
<clipPath id="tclip"><rect x="0" y="0" width="918.7" height="515.6" rx="24"/></clipPath>
<g clip-path="url(#paneclip)">
<text x="19.60" y="343.70" font-family="Liberation Sans" font-size="15.94" fill="#555" textLength="8.04" lengthAdjust="spacingAndGlyphs" >3</text>
<rect x="46" y="333.5" width="153.5" height="86.1" rx="4" fill="#000" opacity="0.12" transform="translate(0,1)" filter="url(#tsh)"/>
<g transform="translate(46,333.5) scale(0.16708)"><g clip-path="url(#tclip)">
<rect x="0" y="0" width="918.7" height="515.6" fill="url(#sbg)"/>
<rect x="87.3" y="49.7" width="724.0" height="10.9" fill="url(#dash)" opacity="0.8"/>
<rect x="0" y="461.1" width="918.7" height="54.5" fill="url(#band)"/>
<rect x="0" y="461.1" width="918.7" height="54.5" fill="url(#bandv)"/>
<rect x="91.0" y="84.0" width="685.0" height="18.0" fill="#e8202a" opacity="0.60"/>
<rect x="112.0" y="147.0" width="687.0" height="8.0" fill="#9a9a9a" opacity="0.70"/>
<rect x="112.0" y="175.0" width="687.0" height="8.0" fill="#9a9a9a" opacity="0.70"/>
<rect x="112.0" y="199.0" width="111.0" height="8.0" fill="#9a9a9a" opacity="0.70"/>
<rect x="112.0" y="235.0" width="163.0" height="10.0" fill="#e8202a" opacity="0.90"/>
<rect x="290.0" y="236.0" width="509.0" height="8.0" fill="#9a9a9a" opacity="0.70"/>
<rect x="112.0" y="262.0" width="687.0" height="8.0" fill="#8e8e8e" opacity="0.70"/>
<rect x="112.0" y="285.0" width="687.0" height="8.0" fill="#8e8e8e" opacity="0.70"/>
<rect x="112.0" y="310.0" width="274.0" height="8.0" fill="#8e8e8e" opacity="0.70"/>
<rect x="670" y="337" width="220" height="144" fill="#fbfbfd"/><rect x="695" y="380" width="22" height="80" fill="#e07a5a"/><rect x="735" y="350" width="55" height="75" fill="#a9c9ee"/><rect x="790" y="385" width="25" height="70" fill="#3f456e"/><rect x="815" y="420" width="25" height="40" fill="#f2d28a"/>
</g></g>
<text x="19.60" y="453.50" font-family="Liberation Sans" font-size="15.94" fill="#555" textLength="8.04" lengthAdjust="spacingAndGlyphs" >4</text>
<rect x="46" y="443.3" width="153.5" height="86.1" rx="4" fill="#000" opacity="0.12" transform="translate(0,1)" filter="url(#tsh)"/>
<g transform="translate(46,443.3) scale(0.16708)"><g clip-path="url(#tclip)">
<rect x="0" y="0" width="918.7" height="515.6" fill="url(#sbg)"/>
<rect x="87.3" y="49.7" width="724.0" height="10.9" fill="url(#dash)" opacity="0.8"/>
<rect x="0" y="461.1" width="918.7" height="54.5" fill="url(#band)"/>
<rect x="0" y="461.1" width="918.7" height="54.5" fill="url(#bandv)"/>
<rect x="223.0" y="77.0" width="490.0" height="22.0" fill="#e8202a" opacity="0.50"/>
<rect x="112.0" y="136.0" width="695.0" height="8.0" fill="#9a9a9a" opacity="1.00"/>
<rect x="112.0" y="161.5" width="695.0" height="9.0" fill="#777" opacity="1.00"/>
<rect x="112.0" y="189.5" width="753.0" height="9.0" fill="#444" opacity="1.00"/>
<rect x="155.0" y="220.0" width="360.0" height="10.0" fill="#3a78c8" opacity="0.90"/>
<rect x="100.0" y="253.0" width="716.0" height="22.0" fill="#4a5f96" opacity="1.00"/>
<rect x="100" y="275" width="716" height="25" fill="#c9cfe0"/><rect x="100" y="356" width="716" height="39" fill="#d4d4de"/>
<rect x="112.0" y="282.5" width="128.0" height="9.0" fill="#222" opacity="1.00"/>
<rect x="480.0" y="279.0" width="320.0" height="6.0" fill="#999" opacity="1.00"/>
<rect x="480.0" y="290.0" width="140.0" height="6.0" fill="#aaa" opacity="1.00"/>
<rect x="112.0" y="325.5" width="143.0" height="9.0" fill="#222" opacity="1.00"/>
<rect x="480.0" y="322.0" width="320.0" height="6.0" fill="#999" opacity="1.00"/>
<rect x="480.0" y="333.0" width="140.0" height="6.0" fill="#aaa" opacity="1.00"/>
<rect x="112.0" y="370.5" width="218.0" height="9.0" fill="#222" opacity="1.00"/>
<rect x="480.0" y="367.0" width="320.0" height="6.0" fill="#999" opacity="1.00"/>
<rect x="480.0" y="378.0" width="140.0" height="6.0" fill="#aaa" opacity="1.00"/>
<rect x="112.0" y="415.5" width="138.0" height="9.0" fill="#222" opacity="1.00"/>
<rect x="480.0" y="412.0" width="320.0" height="6.0" fill="#999" opacity="1.00"/>
<rect x="480.0" y="423.0" width="140.0" height="6.0" fill="#aaa" opacity="1.00"/>
</g></g>
<text x="19.60" y="563.30" font-family="Liberation Sans" font-size="15.94" fill="#555" textLength="8.04" lengthAdjust="spacingAndGlyphs" >5</text>
<rect x="46" y="553.1" width="153.5" height="86.1" rx="4" fill="#000" opacity="0.12" transform="translate(0,1)" filter="url(#tsh)"/>
<g transform="translate(46,553.1) scale(0.16708)"><g clip-path="url(#tclip)">
<rect x="0" y="0" width="918.7" height="515.6" fill="url(#sbg)"/>
<rect x="87.3" y="49.7" width="724.0" height="10.9" fill="url(#dash)" opacity="0.8"/>
<rect x="0" y="461.1" width="918.7" height="54.5" fill="url(#band)"/>
<rect x="0" y="461.1" width="918.7" height="54.5" fill="url(#bandv)"/>
<rect x="103.0" y="83.0" width="685.0" height="18.0" fill="#e8202a" opacity="0.60"/>
<rect x="112.0" y="140.5" width="592.0" height="7.0" fill="#aaa" opacity="1.00"/>
<rect x="107.0" y="179.5" width="726.0" height="11.0" fill="#3a3a3a" opacity="0.75"/>
<rect x="107.0" y="200.5" width="726.0" height="11.0" fill="#3a3a3a" opacity="0.75"/>
<rect x="107.0" y="227.5" width="726.0" height="11.0" fill="#3a3a3a" opacity="0.75"/>
<rect x="107.0" y="253.5" width="726.0" height="11.0" fill="#3a3a3a" opacity="0.75"/>
<rect x="107.0" y="295.0" width="723.0" height="8.0" fill="#777" opacity="0.60"/>
<rect x="107.0" y="316.0" width="723.0" height="8.0" fill="#777" opacity="0.60"/>
<rect x="107.0" y="341.0" width="723.0" height="8.0" fill="#777" opacity="0.60"/>
<rect x="107.0" y="368.0" width="196.0" height="8.0" fill="#777" opacity="0.60"/>
</g></g>
<text x="19.60" y="672.90" font-family="Liberation Sans" font-size="15.94" fill="#555" textLength="8.04" lengthAdjust="spacingAndGlyphs" >6</text>
<rect x="46" y="662.7" width="153.5" height="86.1" rx="4" fill="#000" opacity="0.12" transform="translate(0,1)" filter="url(#tsh)"/>
<g transform="translate(46,662.7) scale(0.16708)"><g clip-path="url(#tclip)">
<rect x="0" y="0" width="918.7" height="515.6" fill="url(#sbg)"/>
<rect x="87.3" y="49.7" width="565.7" height="10.9" fill="url(#dash)" opacity="0.8"/>
<rect x="0" y="461.1" width="918.7" height="54.5" fill="url(#band)"/>
<rect x="0" y="461.1" width="918.7" height="54.5" fill="url(#bandv)"/>
<rect x="658" y="35" width="227" height="120" fill="#c0303f"/>
<rect x="658" y="43.5" width="227" height="8.5" fill="#f4f4f4"/>
<rect x="658" y="60.6" width="227" height="8.5" fill="#f4f4f4"/>
<rect x="658" y="77.7" width="227" height="8.5" fill="#f4f4f4"/>
<rect x="658" y="94.8" width="227" height="8.5" fill="#f4f4f4"/>
<rect x="658" y="111.9" width="227" height="8.5" fill="#f4f4f4"/>
<rect x="658" y="129.0" width="227" height="8.5" fill="#f4f4f4"/>
<rect x="658" y="146.1" width="227" height="8.5" fill="#f4f4f4"/>
<rect x="658" y="35" width="100" height="66" fill="#3b4a8a"/>
<rect x="151.0" y="111.0" width="390.0" height="22.0" fill="#e8202a" opacity="0.60"/>
<rect x="103.0" y="172.0" width="602.0" height="6.0" fill="#444" opacity="0.70"/>
<rect x="103.0" y="203.0" width="129.0" height="6.0" fill="#444" opacity="0.70"/>
<rect x="103.0" y="232.0" width="607.0" height="6.0" fill="#444" opacity="0.70"/>
<rect x="103.0" y="251.0" width="182.0" height="6.0" fill="#444" opacity="0.70"/>
<rect x="103.0" y="285.0" width="412.0" height="6.0" fill="#444" opacity="0.70"/>
<rect x="103.0" y="311.0" width="487.0" height="6.0" fill="#444" opacity="0.70"/>
<rect x="103.0" y="337.0" width="167.0" height="6.0" fill="#444" opacity="0.70"/>
<rect x="103.0" y="366.0" width="162.0" height="6.0" fill="#444" opacity="0.70"/>
<rect x="103.0" y="378.0" width="462.0" height="6.0" fill="#444" opacity="0.70"/>
</g></g>
<text x="19.60" y="782.40" font-family="Liberation Sans" font-size="15.94" fill="#c43e1c" textLength="8.04" lengthAdjust="spacingAndGlyphs" >7</text>
<rect x="41.8" y="769.5" width="162" height="93" rx="7" fill="none" stroke="#c43e1c" stroke-width="2.8"/>
<rect x="46" y="772.2" width="153.5" height="86.1" rx="4" fill="#000" opacity="0.12" transform="translate(0,1)" filter="url(#tsh)"/>
<g transform="translate(46,772.2) scale(0.16708)"><g clip-path="url(#tclip)">
<use href="#s7"/>
</g></g>
<text x="19.60" y="892.00" font-family="Liberation Sans" font-size="15.94" fill="#555" textLength="8.04" lengthAdjust="spacingAndGlyphs" >8</text>
<rect x="46" y="881.8" width="153.5" height="86.1" rx="4" fill="#000" opacity="0.12" transform="translate(0,1)" filter="url(#tsh)"/>
<g transform="translate(46,881.8) scale(0.16708)"><g clip-path="url(#tclip)">
<rect x="0" y="0" width="918.7" height="515.6" fill="url(#sbg)"/>
<rect x="87.3" y="49.7" width="724.0" height="10.9" fill="url(#dash)" opacity="0.8"/>
<rect x="0" y="461.1" width="918.7" height="54.5" fill="url(#band)"/>
<rect x="0" y="461.1" width="918.7" height="54.5" fill="url(#bandv)"/>
<rect x="150.0" y="79.0" width="550.0" height="14.0" fill="#e8202a" opacity="0.60"/>
</g></g>
</g>
<text x="259.30" y="884.40" font-family="Liberation Sans" font-size="16.81" fill="#6b6b6b" textLength="265.97" lengthAdjust="spacingAndGlyphs" >Щелкните, чтобы добавить заметки</text>
<rect x="6" y="897" width="1516" height="25" fill="#f4f4f6"/>
<text x="19.50" y="915.10" font-family="Liberation Sans" font-size="14.20" fill="#5a5a5a" textLength="78.02" lengthAdjust="spacingAndGlyphs" >Слайд 7 из 13</text>
<text x="134.40" y="915.70" font-family="Liberation Sans" font-size="14.20" fill="#333" textLength="44.96" lengthAdjust="spacingAndGlyphs" >русский</text>
<path d="M206,905 m-2.5,0 a2.5,2.5 0 1 0 5,0 a2.5,2.5 0 1 0 -5,0 M200,909 H212 M206,908 V913 L202,917.5 M206,913 L208,915" stroke="#666" stroke-width="1.1" fill="none"/><path d="M208.5,912 L214,917.5 M214,912 L208.5,917.5" stroke="#666" stroke-width="1.1"/>
<text x="219.60" y="914.60" font-family="Liberation Sans" font-size="13.91" fill="#333" font-weight="bold" textLength="331.98" lengthAdjust="spacingAndGlyphs" >Специальные возможности: проверьте рекомендации</text>
<path d="M913.5,912 H931.5 M913.5,915.5 H931.5 M913.5,919 H931.5 M919,905 L922.5,902 L926,905" stroke="#555" stroke-width="1.1" fill="none"/>
<text x="933.30" y="916.00" font-family="Liberation Sans" font-size="14.49" fill="#333" textLength="48.96" lengthAdjust="spacingAndGlyphs" >Заметки</text>
<path d="M1005,902.8 H1019.5 V912.5 H1010 L1006.5,916.5 V912.5 H1005Z" stroke="#555" stroke-width="1.1" fill="none"/>
<text x="1024.00" y="916.00" font-family="Liberation Sans" font-size="14.49" fill="#333" textLength="76.01" lengthAdjust="spacingAndGlyphs" >Примечания</text>
<rect x="1121.7" y="898.3" width="44" height="23.4" fill="#dedde1"/>
<rect x="1136" y="903" width="15.5" height="13.5" stroke="#444" stroke-width="1.1" fill="none"/><path d="M1139,903 V916.5 M1141.5,906 H1148.5 V912 H1141.5Z" stroke="#444" stroke-width="1" fill="none"/>
<g stroke="#555" stroke-width="1.1" fill="none"><rect x="1180.5" y="903" width="6" height="5.5"/><rect x="1189.5" y="903" width="6" height="5.5"/><rect x="1180.5" y="911" width="6" height="5.5"/><rect x="1189.5" y="911" width="6" height="5.5"/></g>
<path d="M1224.5,903.5 Q1228,902.5 1231.7,904 Q1235.4,902.5 1239,903.5 V916 Q1235.4,915 1231.7,916.5 Q1228,915 1224.5,916Z M1231.7,904 V916.5 M1226.5,906 H1230 M1226.5,909 H1230 M1233.5,906 H1237 M1233.5,909 H1237" stroke="#555" stroke-width="1" fill="none"/>
<path d="M1269.5,903 H1282.5 M1270.5,903 V910.5 H1281.5 V903 M1276,910.5 V916.5 M1272.5,916.5 H1279.5" stroke="#555" stroke-width="1.1" fill="none"/>
<path d="M1305,910 H1314.3 M1320.7,910 H1430.7 M1376,907 V913 M1435,910 H1445 M1440,905 V915" stroke="#666" stroke-width="1.1" fill="none"/>
<rect x="1353.3" y="904" width="6" height="12" fill="#555"/>
<text x="1458.30" y="915.70" font-family="Liberation Sans" font-size="14.49" fill="#333" textLength="26.74" lengthAdjust="spacingAndGlyphs" >65 %</text>
<rect x="1504.5" y="905.5" width="8" height="8" stroke="#555" stroke-width="1.1" fill="none"/><path d="M1502.5,907 L1500.5,909.5 L1502.5,912 M1514.5,907 L1516.5,909.5 L1514.5,912 M1506,903.5 L1508.5,901.5 L1511,903.5 M1506,915.5 L1508.5,917.5 L1511,915.5" stroke="#555" stroke-width="1" fill="none"/>
<path transform="translate(1390.7,561.2) scale(1.12)" d="M0,0 L0,16.2 L3.9,12.5 L6.4,18.2 L8.7,17.2 L6.3,11.6 L11.6,11.6 Z" fill="#fff" stroke="#111" stroke-width="0.9" stroke-linejoin="round"/>
<circle cx="42.3" cy="888.4" r="15.8" fill="#1f2021"/><path d="M34.5,895.5 L35.5,891 L44.5,882 L48,885.5 L39,894.5Z M42.5,884 L46,887.5" stroke="#27c46a" stroke-width="1.3" fill="none"/><path d="M34.5,897.5 H49" stroke="#27c46a" stroke-width="1.3"/>
<path d="M1543,247.5 H1912 Q1918,247.5 1918,253.5 V780 Q1918,786.5 1912,786.5 H1543 Q1535,786.5 1535,778.5 V255.5 Q1535,247.5 1543,247.5Z" fill="#222222"/>
<clipPath id="vclip"><path d="M1542,248 H1728 V357 H1535 V255 Q1535,248 1542,248Z"/></clipPath>
<filter id="vblur"><feGaussianBlur stdDeviation="2.2"/></filter><filter id="vblur2"><feGaussianBlur stdDeviation="1"/></filter>
<g clip-path="url(#vclip)"><rect x="1534" y="247" width="195" height="111" fill="#d9dbdc"/><g filter="url(#vblur)"><rect x="1540" y="252" width="40" height="45" fill="#e4e6e7"/><rect x="1655" y="255" width="28" height="40" fill="#e0e2e3"/><rect x="1686" y="247" width="45" height="111" fill="#55302a"/><rect x="1716" y="247" width="15" height="111" fill="#3b2a26"/><path d="M1534,304 Q1560,300 1582,305 L1590,358 H1534Z" fill="#d3312a"/><path d="M1648,303 Q1684,299 1700,310 L1706,358 H1642Z" fill="#d0302a"/><path d="M1552,358 Q1560,330 1588,324 Q1614,320 1645,324 Q1680,332 1702,358Z" fill="#7f8ea6"/><path d="M1576,292 Q1576,272 1611,272 Q1647,272 1647,292 L1646,318 Q1642,342 1611,343 Q1580,342 1577,318Z" fill="#a27a6c"/><path d="M1567,306 Q1556,258 1586,247 Q1612,240 1642,248 Q1664,262 1655,303 Q1650,288 1646,281 Q1636,274 1611,277 Q1586,274 1578,281 Q1571,292 1567,306Z" fill="#302824"/></g><g filter="url(#vblur2)"><path d="M1578,296 Q1592,292 1606,297 Q1604,307 1590,307 Q1580,306 1578,296Z M1615,297 Q1630,291 1643,296 Q1642,306 1628,307 Q1616,306 1615,297Z" stroke="#6d6a62" stroke-width="1.5" fill="none"/><ellipse cx="1607" cy="334" rx="8" ry="3.2" fill="#4e3232"/><ellipse cx="1610" cy="317" rx="5" ry="4" fill="#8a6458" opacity="0.7"/></g><rect x="1534" y="336.4" width="153" height="21" fill="#000" opacity="0.12"/></g>
<path d="M1543,248.2 H1727.5 V356 H1535.2 V256 Q1535.2,248.2 1543,248.2Z" fill="none" stroke="#3ddc97" stroke-width="2.4"/>
<text x="1541.30" y="348.70" font-family="Liberation Sans" font-size="12.90" fill="#f4f4f4" textLength="143.27" lengthAdjust="spacingAndGlyphs" >Карлыгаш Уразбековна</text>
<text x="1804.30" y="307.00" font-family="Liberation Sans" font-size="15.51" fill="#fff" font-weight="bold" textLength="36.17" lengthAdjust="spacingAndGlyphs" >USER</text>
<rect x="1730.2" y="335.1" width="55.3" height="18.5" rx="4" fill="#2c2c2c"/>
<path d="M1736.5,342.6 Q1736.5,339.1 1739.2,339.1 Q1741.9,339.1 1741.9,342.6 L1741.9,346.1 Q1739.2,347.8 1736.5,346.1 Z" fill="#e4474c"/><rect x="1736.2" y="348.9" width="6" height="1.5" fill="#e4474c"/><path d="M1733.2,351.1 L1745.7,338.4" stroke="#f08a8d" stroke-width="1.2"/>
<text x="1751.50" y="349.10" font-family="Liberation Sans" font-size="13.04" fill="#e8e8e8" textLength="30.51" lengthAdjust="spacingAndGlyphs" >USER</text>
<text x="1571.30" y="415.20" font-family="Liberation Sans" font-size="15.51" fill="#fff" font-weight="bold" textLength="120.70" lengthAdjust="spacingAndGlyphs" >Bekarys Nuriman</text>
<rect x="1537.7" y="443.3" width="123.5" height="18.5" rx="4" fill="#2c2c2c"/>
<path d="M1544.0,450.8 Q1544.0,447.3 1546.7,447.3 Q1549.4,447.3 1549.4,450.8 L1549.4,454.3 Q1546.7,456.0 1544.0,454.3 Z" fill="#e4474c"/><rect x="1543.7" y="457.1" width="6" height="1.5" fill="#e4474c"/><path d="M1540.7,459.3 L1553.2,446.6" stroke="#f08a8d" stroke-width="1.2"/>
<text x="1559.30" y="457.30" font-family="Liberation Sans" font-size="13.04" fill="#e8e8e8" textLength="97.70" lengthAdjust="spacingAndGlyphs" >Bekarys Nuriman</text>
<text x="1760.00" y="415.20" font-family="Liberation Sans" font-size="15.51" fill="#fff" font-weight="bold" textLength="124.95" lengthAdjust="spacingAndGlyphs" >Алена  Досбага...</text>
<rect x="1730.2" y="443.3" width="163.5" height="18.5" rx="4" fill="#2c2c2c"/>
<path d="M1736.5,450.8 Q1736.5,447.3 1739.2,447.3 Q1741.9,447.3 1741.9,450.8 L1741.9,454.3 Q1739.2,456.0 1736.5,454.3 Z" fill="#e4474c"/><rect x="1736.2" y="457.1" width="6" height="1.5" fill="#e4474c"/><path d="M1733.2,459.3 L1745.7,446.6" stroke="#f08a8d" stroke-width="1.2"/>
<text x="1751.50" y="457.30" font-family="Liberation Sans" font-size="13.04" fill="#e8e8e8" textLength="137.96" lengthAdjust="spacingAndGlyphs" >Алена Досбаганбетова</text>
<text x="1567.40" y="523.40" font-family="Liberation Sans" font-size="15.51" fill="#fff" font-weight="bold" textLength="126.82" lengthAdjust="spacingAndGlyphs" >Абдуразова  Пе...</text>
<rect x="1537.7" y="551.5" width="189.5" height="18.5" rx="4" fill="#2c2c2c"/>
<path d="M1544.0,559.0 Q1544.0,555.5 1546.7,555.5 Q1549.4,555.5 1549.4,559.0 L1549.4,562.5 Q1546.7,564.2 1544.0,562.5 Z" fill="#e4474c"/><rect x="1543.7" y="565.3" width="6" height="1.5" fill="#e4474c"/><path d="M1540.7,567.5 L1553.2,554.8" stroke="#f08a8d" stroke-width="1.2"/>
<text x="1559.30" y="565.50" font-family="Liberation Sans" font-size="13.04" fill="#e8e8e8" textLength="165.83" lengthAdjust="spacingAndGlyphs" >Абдуразова Перизат, ОҚПУ</text>
<text x="1759.90" y="523.40" font-family="Liberation Sans" font-size="15.51" fill="#fff" font-weight="bold" textLength="126.81" lengthAdjust="spacingAndGlyphs" >Мамраймов  Се...</text>
<rect x="1730.2" y="551.5" width="138.8" height="18.5" rx="4" fill="#2c2c2c"/>
<path d="M1736.5,559.0 Q1736.5,555.5 1739.2,555.5 Q1741.9,555.5 1741.9,559.0 L1741.9,562.5 Q1739.2,564.2 1736.5,562.5 Z" fill="#e4474c"/><rect x="1736.2" y="565.3" width="6" height="1.5" fill="#e4474c"/><path d="M1733.2,567.5 L1745.7,554.8" stroke="#f08a8d" stroke-width="1.2"/>
<text x="1751.50" y="565.50" font-family="Liberation Sans" font-size="13.04" fill="#e8e8e8" textLength="113.65" lengthAdjust="spacingAndGlyphs" >Мамраймов Серик</text>
<text x="1567.40" y="631.60" font-family="Liberation Sans" font-size="15.51" fill="#fff" font-weight="bold" textLength="126.18" lengthAdjust="spacingAndGlyphs" >Анарбаев Қайрат</text>
<rect x="1537.7" y="659.7" width="130.5" height="18.5" rx="4" fill="#2c2c2c"/>
<path d="M1544.0,667.2 Q1544.0,663.7 1546.7,663.7 Q1549.4,663.7 1549.4,667.2 L1549.4,670.7 Q1546.7,672.4 1544.0,670.7 Z" fill="#e4474c"/><rect x="1543.7" y="673.5" width="6" height="1.5" fill="#e4474c"/><path d="M1540.7,675.7 L1553.2,663.0" stroke="#f08a8d" stroke-width="1.2"/>
<text x="1559.30" y="673.70" font-family="Liberation Sans" font-size="13.04" fill="#e8e8e8" textLength="104.33" lengthAdjust="spacingAndGlyphs" >Анарбаев Қайрат</text>
<text x="1759.90" y="631.60" font-family="Liberation Sans" font-size="15.51" fill="#fff" font-weight="bold" textLength="126.07" lengthAdjust="spacingAndGlyphs" >Бибигуль  Шагр...</text>
<rect x="1730.2" y="659.7" width="143.7" height="18.5" rx="4" fill="#2c2c2c"/>
<path d="M1736.5,667.2 Q1736.5,663.7 1739.2,663.7 Q1741.9,663.7 1741.9,667.2 L1741.9,670.7 Q1739.2,672.4 1736.5,670.7 Z" fill="#e4474c"/><rect x="1736.2" y="673.5" width="6" height="1.5" fill="#e4474c"/><path d="M1733.2,675.7 L1745.7,663.0" stroke="#f08a8d" stroke-width="1.2"/>
<text x="1751.50" y="673.70" font-family="Liberation Sans" font-size="13.04" fill="#e8e8e8" textLength="117.70" lengthAdjust="spacingAndGlyphs" >Бибигуль Шаграева</text>
<text x="1567.40" y="739.80" font-family="Liberation Sans" font-size="15.51" fill="#fff" font-weight="bold" textLength="127.36" lengthAdjust="spacingAndGlyphs" >Akkongyr  Zhyly...</text>
<rect x="1537.7" y="767.9" width="189.5" height="18.5" rx="4" fill="#2c2c2c"/>
<path d="M1544.0,775.4 Q1544.0,771.9 1546.7,771.9 Q1549.4,771.9 1549.4,775.4 L1549.4,778.9 Q1546.7,780.6 1544.0,778.9 Z" fill="#e4474c"/><rect x="1543.7" y="781.7" width="6" height="1.5" fill="#e4474c"/><path d="M1540.7,783.9 L1553.2,771.2" stroke="#f08a8d" stroke-width="1.2"/>
<text x="1559.30" y="781.90" font-family="Liberation Sans" font-size="13.04" fill="#e8e8e8" textLength="165.99" lengthAdjust="spacingAndGlyphs" >Akkongyr Zhylysbayeva O.Z...</text>
<text x="1764.50" y="739.80" font-family="Liberation Sans" font-size="15.51" fill="#fff" font-weight="bold" textLength="116.72" lengthAdjust="spacingAndGlyphs" >Ruslan Barikulov</text>
<rect x="1730.2" y="767.9" width="118.3" height="18.5" rx="4" fill="#2c2c2c"/>
<path d="M1736.5,775.4 Q1736.5,771.9 1739.2,771.9 Q1741.9,771.9 1741.9,775.4 L1741.9,778.9 Q1739.2,780.6 1736.5,778.9 Z" fill="#e4474c"/><rect x="1736.2" y="781.7" width="6" height="1.5" fill="#e4474c"/><path d="M1733.2,783.9 L1745.7,771.2" stroke="#f08a8d" stroke-width="1.2"/>
<text x="1751.50" y="781.90" font-family="Liberation Sans" font-size="13.04" fill="#e8e8e8" textLength="93.34" lengthAdjust="spacingAndGlyphs" >Ruslan Barikulov</text>
<path d="M1526,533 V556.5 M1529.5,533 V556.5" stroke="#9a9a9a" stroke-width="1"/>
<rect x="48" y="991.5" width="8" height="14" rx="4" stroke="#f2f2f2" stroke-width="1.6" fill="none"/><path d="M44.5,1001 Q44.5,1010 52,1010 Q59.5,1010 59.5,1001 M52,1010 V1014.5 M47.5,1014.5 H56.5" stroke="#f2f2f2" stroke-width="1.6" fill="none"/>
<path d="M40.5,1015 L63.5,992" stroke="#e8195a" stroke-width="2.6"/>
<path d="M80.5,1005.5 L84,1001.5 L87.5,1005.5" stroke="#f2f2f2" stroke-width="1.5" fill="none"/>
<text x="39.00" y="1030.00" font-family="Liberation Sans" font-size="13.04" fill="#b9b9b9" textLength="25.86" lengthAdjust="spacingAndGlyphs" >Звук</text>
<rect x="133.5" y="997" width="17" height="13.5" rx="2.5" stroke="#f2f2f2" stroke-width="1.7" fill="none"/><path d="M150.5,1002 L157,997.5 V1010 L150.5,1005.5" stroke="#f2f2f2" stroke-width="1.7" fill="none"/>
<path d="M134,1014.5 L156.5,992.5" stroke="#e8195a" stroke-width="2.6"/>
<path d="M178,1005.5 L181.5,1001.5 L185,1005.5" stroke="#f2f2f2" stroke-width="1.5" fill="none"/>
<text x="128.50" y="1030.00" font-family="Liberation Sans" font-size="13.04" fill="#b9b9b9" textLength="32.98" lengthAdjust="spacingAndGlyphs" >Видео</text>
<g stroke="#f2f2f2" stroke-width="1.4" fill="none"><circle cx="652.5" cy="998.6" r="3.2"/><path d="M654.5,1004.6 Q647.2,1004.2 647.2,1009.2 V1011.8 H652.5"/><circle cx="660.2" cy="1001.4" r="3"/><path d="M653.8,1012 V1010.6 Q653.8,1006.6 660,1006.6 Q666,1006.6 666,1010.6 V1012Z"/></g>
<text x="671.50" y="1005.00" font-family="Liberation Sans" font-size="12.32" fill="#b9b9b9" font-weight="bold" textLength="9.50" lengthAdjust="spacingAndGlyphs" >11</text>
<path d="M705.5,1005.5 L709,1001.5 L712.5,1005.5" stroke="#f2f2f2" stroke-width="1.5" fill="none"/>
<text x="627.50" y="1030.00" font-family="Liberation Sans" font-size="13.04" fill="#b9b9b9" textLength="57.51" lengthAdjust="spacingAndGlyphs" >Участники</text>
<g stroke="#f2f2f2" stroke-width="1.4" fill="none"><path d="M761,997 H766 Q772,997 772,1002.5 V1004.5 Q772,1010.5 766,1010.5 H761.5 L757,1013.8 L757.8,1009.8 Q755,1008 755,1004.5 V1002.5 Q755,997 761,997Z"/><path d="M758.5,996.5 Q759.5,991.5 765,991.5 H770"/></g><g fill="#f2f2f2"><circle cx="759.8" cy="1004" r="1"/><circle cx="763.5" cy="1004" r="1"/><circle cx="767.2" cy="1004" r="1"/></g>
<circle cx="778" cy="996.5" r="7.7" fill="#e02828"/>
<text x="774.80" y="1000.80" font-family="Liberation Sans" font-size="11.88" fill="#fff" textLength="6.22" lengthAdjust="spacingAndGlyphs" >5</text>
<path d="M795.5,1005.5 L799,1001.5 L802.5,1005.5" stroke="#f2f2f2" stroke-width="1.5" fill="none"/>
<text x="756.00" y="1030.00" font-family="Liberation Sans" font-size="13.04" fill="#b9b9b9" textLength="18.97" lengthAdjust="spacingAndGlyphs" >Чат</text>
<path d="M860,1013.5 Q848.5,1006 848.5,999.5 Q848.5,993.5 854,993.5 Q858,993.5 860,997 Q862,993.5 866,993.5 Q871.5,993.5 871.5,999.5 Q871.5,1006 860,1013.5Z" stroke="#f2f2f2" stroke-width="1.4" fill="none"/>
<text x="819.00" y="1030.00" font-family="Liberation Sans" font-size="13.04" fill="#b9b9b9" textLength="82.46" lengthAdjust="spacingAndGlyphs" >Отреагировать</text>
<rect x="947" y="992.5" width="24" height="20.5" rx="4" fill="#1ee98c"/><path d="M959,1008.5 V998.8 M954.5,1003 L959,998.5 L963.5,1003" stroke="#1d3b2c" stroke-width="2.3" fill="none"/>
<text x="926.50" y="1030.00" font-family="Liberation Sans" font-size="13.04" fill="#b9b9b9" textLength="64.99" lengthAdjust="spacingAndGlyphs" >Поделиться</text>
<defs><linearGradient id="aig" x1="0" y1="0" x2="1" y2="1"><stop offset="0" stop-color="#c7e3ff"/><stop offset="1" stop-color="#7fc3ff"/></linearGradient></defs>
<defs><linearGradient id="aig2" x1="0" y1="0" x2="1" y2="1"><stop offset="0" stop-color="#f4fbff"/><stop offset="0.5" stop-color="#a9d3df"/><stop offset="1" stop-color="#e8f6fb"/></linearGradient></defs>
<path d="M1053,992.8 Q1054.5,1001.5 1063.8,1003.4 Q1054.5,1005.3 1053,1014.2 Q1051.5,1005.3 1042.3,1003.4 Q1051.5,1001.5 1053,992.8Z" fill="url(#aig2)"/><path d="M1062.2,990.8 Q1062.8,993.8 1065.6,994.5 Q1062.8,995.2 1062.2,998.2 Q1061.6,995.2 1058.8,994.5 Q1061.6,993.8 1062.2,990.8Z" fill="#d9eef4"/>
<text x="1016.00" y="1030.00" font-family="Liberation Sans" font-size="13.04" fill="#b9b9b9" textLength="76.48" lengthAdjust="spacingAndGlyphs" >AI Companion</text>
<circle cx="1170.5" cy="1003" r="11.3" stroke="#f2f2f2" stroke-width="1.4" fill="none"/><circle cx="1170.5" cy="997.5" r="1.2" fill="#f2f2f2"/><path d="M1170.5,1001 V1009.5" stroke="#f2f2f2" stroke-width="1.8"/>
<text x="1109.00" y="1030.00" font-family="Liberation Sans" font-size="13.04" fill="#b9b9b9" textLength="122.46" lengthAdjust="spacingAndGlyphs" >Данные конференции</text>
<circle cx="1277.8" cy="1008.2" r="3.6" stroke="#f2f2f2" stroke-width="1.4" fill="none"/><circle cx="1290" cy="995.9" r="3.6" stroke="#f2f2f2" stroke-width="1.4" fill="none"/><path d="M1282,992 H1276.5 Q1274,992 1274,994.5 V1000 M1286,1012 H1291.5 Q1294,1012 1294,1009.5 V1004" stroke="#f2f2f2" stroke-width="1.4" fill="none"/>
<text x="1248.50" y="1030.00" font-family="Liberation Sans" font-size="13.04" fill="#b9b9b9" textLength="72.46" lengthAdjust="spacingAndGlyphs" >Приложения</text>
<circle cx="1381" cy="1003" r="11.3" stroke="#f2f2f2" stroke-width="1.4" fill="none"/><circle cx="1376" cy="1003" r="1.3" fill="#f2f2f2"/><circle cx="1381" cy="1003" r="1.3" fill="#f2f2f2"/><circle cx="1386" cy="1003" r="1.3" fill="#f2f2f2"/>
<text x="1336.50" y="1030.00" font-family="Liberation Sans" font-size="13.04" fill="#b9b9b9" textLength="89.47" lengthAdjust="spacingAndGlyphs" >Дополнительно</text>
<path d="M1869,990.8 H1883.6 V1012.6 H1877" stroke="#e0205a" stroke-width="1.6" fill="none"/><path d="M1876.8,994 L1881.2,991.5 V1011 L1876.8,1013.6Z" stroke="#e0205a" stroke-width="1.5" fill="none"/>
<circle cx="1869" cy="996.6" r="3" stroke="#fff" stroke-width="1.6" fill="#3a3a3a"/><path d="M1866,1001.5 Q1869,1000.6 1872,1002 L1874.6,1005.4 L1873,1006.6 L1870.6,1004.2 L1870.2,1008 L1872.2,1013.4 L1869.6,1014 L1867.6,1009.6 L1864,1014 L1861.6,1013 L1865.6,1006.6 L1865.2,1004.2 L1862.6,1006.2 L1861.6,1004.6Z" stroke="#fff" stroke-width="1.5" fill="#3a3a3a" stroke-linejoin="round"/>
<text x="1855.00" y="1030.00" font-family="Liberation Sans" font-size="13.04" fill="#b9b9b9" textLength="33.49" lengthAdjust="spacingAndGlyphs" >Выйти</text>
<defs><linearGradient id="tb" x1="0" y1="0" x2="1" y2="0"><stop offset="0" stop-color="#1e3b46"/><stop offset="0.45" stop-color="#1b3240"/><stop offset="0.75" stop-color="#1a2a3e"/><stop offset="1" stop-color="#1a2138"/></linearGradient></defs>
<rect x="0" y="1040" width="1920" height="40" fill="url(#tb)"/>
<path d="M0,1040.5 H1920" stroke="#cfd6da" stroke-width="1" opacity="0.8"/>
<g fill="#fff"><rect x="16" y="1052.2" width="7.5" height="7"/><rect x="24.8" y="1051" width="7.5" height="8.2"/><rect x="16" y="1060.5" width="7.5" height="7"/><rect x="24.8" y="1060.5" width="7.5" height="8.2"/></g>
<rect x="48.3" y="1041" width="343.7" height="39" fill="#f1f1f1"/>
<circle cx="70.5" cy="1057" r="5.2" stroke="#222" stroke-width="1.3" fill="none"/><path d="M66.5,1061 L60,1067.5" stroke="#222" stroke-width="1.4"/>
<text x="88.30" y="1065.80" font-family="Liberation Sans" font-size="15.22" fill="#222" textLength="42.82" lengthAdjust="spacingAndGlyphs" >Поиск</text>
<path d="M408,1054 H418 V1066 H408Z M420.5,1052.5 V1067.5 M423.5,1054 V1066 M408,1059 H418" stroke="#fff" stroke-width="1.3" fill="none"/>
<path d="M455,1053 H464 L466,1055 H478.5 V1071 H455Z" fill="#e8a92c"/><rect x="455" y="1058" width="23.5" height="13" fill="#f7c948"/><rect x="462" y="1062" width="9" height="6" fill="#2a7bd0"/>
<rect x="446.5" y="1077.5" width="39.5" height="2.5" fill="#9fc8e8"/>
<path d="M503.5,1055 H526.5 V1070 Q526.5,1071 525.5,1071 H504.5 Q503.5,1071 503.5,1070Z" fill="#e9eef2"/><path d="M509.5,1055 V1052 Q509.5,1049 515,1049 Q520.5,1049 520.5,1052 V1055" stroke="#2d7fd3" stroke-width="1.4" fill="none"/><rect x="509" y="1058.5" width="5" height="5" fill="#f25022"/><rect x="515" y="1058.5" width="5" height="5" fill="#7fba00"/><rect x="509" y="1064.5" width="5" height="5" fill="#00a4ef"/><rect x="515" y="1064.5" width="5" height="5" fill="#ffb900"/>
<path d="M553,1056 L565,1049 L577,1056 V1068 H553Z" fill="#2670c7"/><path d="M553,1056 L565,1063 L577,1056" stroke="#a8d0f5" stroke-width="1.2" fill="none"/>
<rect x="561" y="1060" width="26.5" height="15.5" rx="7.7" fill="#2b2f36" stroke="#8a8f96" stroke-width="1"/>
<text x="564.00" y="1072.00" font-family="Liberation Sans" font-size="11.59" fill="#fff" textLength="19.98" lengthAdjust="spacingAndGlyphs" >99+</text>
<rect x="607" y="1050" width="18" height="21" rx="1.5" fill="#e8eef8"/><path d="M613,1054 H623 M613,1058 H623 M613,1062 H623 M613,1066 H623" stroke="#2b579a" stroke-width="1.2"/><rect x="600" y="1053.5" width="14" height="14" rx="1.5" fill="#2b579a"/><text x="601.5" y="1064.5" font-family="Liberation Sans" font-weight="bold" font-size="10" fill="#fff">W</text>
<rect x="594" y="1077.5" width="40" height="2.5" fill="#9fc8e8"/>
<circle cx="662.5" cy="1059.5" r="12" fill="#1f6fe5"/><text x="652.5" y="1063.8" font-family="Liberation Sans" font-weight="bold" font-size="11.5" fill="#fff" textLength="20" lengthAdjust="spacingAndGlyphs">zm</text>
<rect x="643" y="1077.5" width="39.5" height="2.5" fill="#9fc8e8"/>
<circle cx="711.5" cy="1060" r="11.5" fill="#db4437"/><path d="M711.5,1060 L701.5,1054.3 A11.5,11.5 0 0 0 705.7,1069.9Z" fill="#0f9d58"/><path d="M711.5,1060 L705.7,1069.9 A11.5,11.5 0 0 0 723,1060Z" fill="#f4b400"/><circle cx="711.5" cy="1060" r="5" fill="#fff"/><circle cx="711.5" cy="1060" r="4" fill="#4285f4"/>
<circle cx="718.5" cy="1066.5" r="6.5" fill="#7b3fb8" stroke="#1a2a3e" stroke-width="1"/><text x="715.3" y="1069.8" font-family="Liberation Sans" font-size="8.5" fill="#fff">A</text>
<rect x="692.5" y="1077.5" width="39" height="2.5" fill="#9fc8e8"/>
<path d="M1699.5,1063.5 L1705,1057.5 L1710.5,1063.5" stroke="#fff" stroke-width="1.3" fill="none"/>
<rect x="1721.5" y="1053.5" width="15.5" height="10.5" stroke="#fff" stroke-width="1.2" fill="none"/><path d="M1725.5,1067.5 H1733 M1729.3,1064 V1067.5" stroke="#fff" stroke-width="1.2"/><path d="M1721.5,1057 H1724 V1066.5" stroke="#fff" stroke-width="1.2" fill="none"/>
<path d="M1744.5,1057 H1748 L1752.5,1053 V1067 L1748,1063 H1744.5Z" stroke="#fff" stroke-width="1.2" fill="none"/><path d="M1755,1056.5 Q1757.5,1060 1755,1063.5 M1757.8,1054 Q1761.5,1060 1757.8,1066" stroke="#fff" stroke-width="1.2" fill="none"/>
<text x="1772.50" y="1065.00" font-family="Liberation Sans" font-size="15.36" fill="#fff" textLength="21.48" lengthAdjust="spacingAndGlyphs" >ҚАЗ</text>
<text x="1820.00" y="1056.00" font-family="Liberation Sans" font-size="14.06" fill="#fff" textLength="27.49" lengthAdjust="spacingAndGlyphs" >20:02</text>
<text x="1806.00" y="1074.00" font-family="Liberation Sans" font-size="14.06" fill="#fff" textLength="54.98" lengthAdjust="spacingAndGlyphs" >20.06.2025</text>
<path d="M1879.5,1052 H1895 V1063.5 H1885 L1881,1067 V1063.5 H1879.5Z" fill="#fff"/><path d="M1882,1055.5 H1892.5 M1882,1058.5 H1892.5" stroke="#1a2138" stroke-width="1"/>
<circle cx="1894.5" cy="1066.5" r="8.3" fill="#1a2138" stroke="#cfd3d8" stroke-width="1"/>
<text x="1891.60" y="1071.00" font-family="Liberation Sans" font-size="13.48" fill="#fff" textLength="6.01" lengthAdjust="spacingAndGlyphs" >3</text>
</svg></body></html>
